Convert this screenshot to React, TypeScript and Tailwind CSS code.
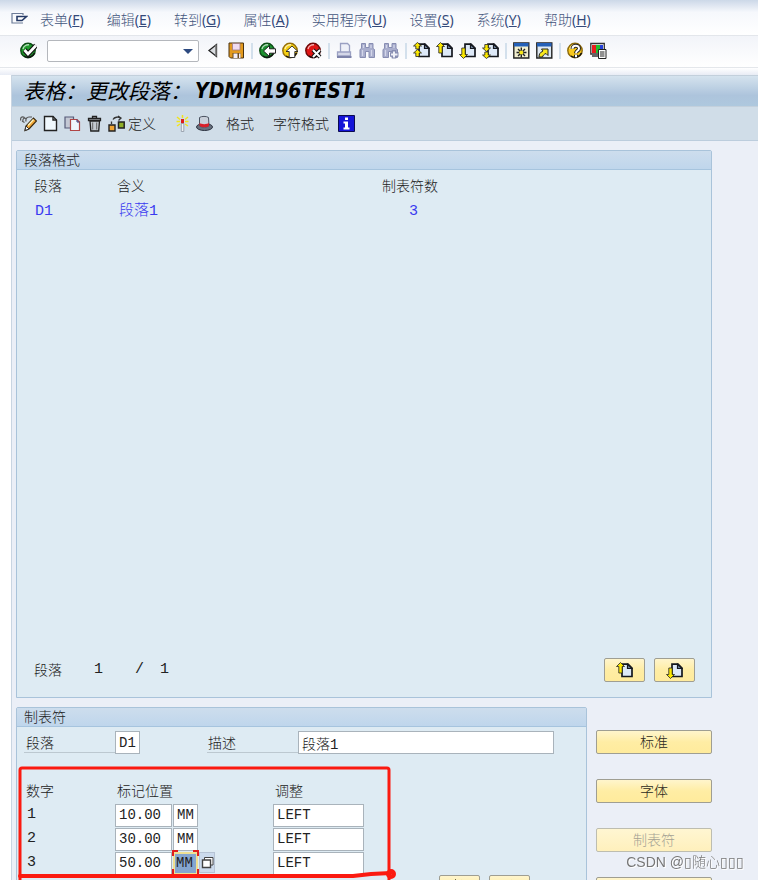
import type { ReactNode } from 'react';
import clsx from 'clsx';

const menus = [
  { label: '表单', hotkey: 'F' },
  { label: '编辑', hotkey: 'E' },
  { label: '转到', hotkey: 'G' },
  { label: '属性', hotkey: 'A' },
  { label: '实用程序', hotkey: 'U' },
  { label: '设置', hotkey: 'S' },
  { label: '系统', hotkey: 'Y' },
  { label: '帮助', hotkey: 'H' },
];

const tabs = [
  { no: 1, position: '10.00', unit: 'MM', align: 'LEFT' },
  { no: 2, position: '30.00', unit: 'MM', align: 'LEFT' },
  { no: 3, position: '50.00', unit: 'MM', align: 'LEFT' },
];

function Icon({ children }: { children: ReactNode }) {
  return (
    <svg width="17" height="17" viewBox="0 0 17 17" fill="none" aria-hidden="true" className="shrink-0">
      {children}
    </svg>
  );
}

function Ball({ color, dark, children }: { color: string; dark: string; children: ReactNode }) {
  return (
    <Icon>
      <circle cx="8" cy="8.5" r="7.2" fill={color} stroke={dark} strokeWidth="1.4" />
      <path d="M3 7a5.500 5.500 0 0 1 6-4.200" stroke="#fff" strokeOpacity=".65" strokeWidth="1.400" />
      <path d="M4 14a7 7 0 0 0 10.500-3" stroke="#111" strokeWidth="1.500" />
      {children}
    </Icon>
  );
}

const CheckIcon = () => (
  <Ball color="#1f9a2c" dark="#0d4d16">
    <path d="M4.500 8l3.500 4L16 3.500" stroke="#111" strokeWidth="5" />
    <path d="M4.500 8l3.500 4L16 3.500" stroke="#fff" strokeWidth="2.800" />
  </Ball>
);
const BackIcon = () => (
  <Ball color="#1c9130" dark="#0d4d16">
    <path d="M4.500 9l6-5.500v3.300h6v4.400h-6v3.300z" fill="#fff" stroke="#111" strokeWidth=".9" />
  </Ball>
);
const ExitIcon = () => (
  <Ball color="#f6cf12" dark="#96700a">
    <path d="M10 4l6 5.500h-3.200v6H7.200v-6H4z" fill="#fff" stroke="#222" strokeWidth=".9" />
  </Ball>
);
const CancelIcon = () => (
  <Ball color="#e01515" dark="#6d0808">
    <path d="M8 8l7 7M15 8l-7 7" stroke="#111" strokeWidth="4" />
    <path d="M8 8l7 7M15 8l-7 7" stroke="#fff" strokeWidth="2" />
  </Ball>
);
const HelpIcon = () => (
  <Ball color="#f8c81c" dark="#8d6a0c">
    <path d="M5.500 6.800c0-4 6.500-4 6.500-.4 0 2.400-3 2.400-3 4.800M9 12.800v2.400" stroke="#222" strokeWidth="4" />
    <path d="M5.500 6.800c0-4 6.500-4 6.500-.4 0 2.400-3 2.400-3 4.800M9 12.800v2.400" stroke="#fff" strokeWidth="2" />
  </Ball>
);

const SaveIcon = () => (
  <Icon>
    <path d="M1 1h14.500v15H2.500L1 14.500z" fill="#e39a1e" stroke="#4a3310" />
    <path d="M4.500 1.500h7.500v6.500H4.500z" fill="#f0dcf2" stroke="#9c7a86" strokeWidth=".8" />
    <path d="M4.500 11h8v5h-8z" fill="#6b4a1c" />
    <path d="M5.500 11.500h4V16h-4zM11 11.500h1.500V16H11z" fill="#f4eef6" />
  </Icon>
);
const PrevIcon = () => (
  <Icon>
    <path d="M11.500 2.500v12L4 8.500z" fill="#d9dce0" stroke="#222" strokeWidth="1.300" />
    <path d="M11 2.500v12" stroke="#777" strokeWidth="1.500" />
  </Icon>
);
const PrintIcon = () => (
  <Icon>
    <path d="M4.500 10V1.500h7l2 2V10" fill="#eef0f8" stroke="#9aa0c2" strokeWidth="1.300" />
    <path d="M1.500 10h13v4h-13z" fill="#d4d7e8" stroke="#9aa0c2" strokeWidth="1.300" />
    <path d="M1 15h14.500" stroke="#7d83aa" strokeWidth="2" />
  </Icon>
);
const FindIcon = ({ next }: { next?: boolean }) => (
  <Icon>
    <path d="M2.500 1.500h4v4H10v-4h4v5l1.500 1v8H10v-6H6.500v6H1v-8l1.500-1z" fill="#a9aecd" stroke="#878db2" />
    <path d="M3.500 8v6M12.500 8v6M4.500 3v3M12 3v3" stroke="#d3d6ea" strokeWidth="1.200" />
    {next && <path d="M12 8v8.500M8 12.500h8.500" stroke="#878db2" strokeWidth="4.500" />}
    {next && <path d="M12 9.500v6M9 12.500h6.500" stroke="#f0f1f8" strokeWidth="2" />}
  </Icon>
);

const arrows = {
  first: 'M4.500 .5l4 3.500H6.200v3H8.500L4.500 3.500M4.500 .5L.5 4h2.300v3H.5h2.300M4.500 7l4 3.500H6.200V14H2.800v-3.500H.5z',
  up: 'M4.500 .5l4 4H6.200V11H2.800V4.500H.5z',
  down: 'M4.500 16.500l4-4H6.200V6H2.800v6.500H.5z',
  last: 'M4.500 9.500l4-3.500H6.200V2.500H2.800V6H.5zM4.500 16.500l4-3.500H6.200V10H2.800v3H.5z',
};

function PageIcon({ arrow }: { arrow: keyof typeof arrows }) {
  return (
    <Icon>
      <path d="M6 2.200h6l4 4v8.300H6z" fill="#dde9f8" stroke="#15181f" strokeWidth="1.700" />
      <path d="M11.500 2.200V6.500h4.500z" fill="#7489a5" stroke="#15181f" strokeWidth="1.200" />
      {arrow === 'first' ? (
        <path d="M4.500 .5l4 3.500H6.200v3H2.800V4H.5zM4.500 7.500l4 3.500H6.200v3.500H2.800V11H.5z" fill="#fbe800" stroke="#222" strokeWidth=".8" />
      ) : (
        <path d={arrows[arrow]} fill="#fbe800" stroke="#222" strokeWidth=".8" />
      )}
    </Icon>
  );
}

const SessionIcon = () => (
  <Icon>
    <path d="M.8 1h15v15H.8z" fill="#f2efcf" stroke="#222" strokeWidth="1.400" />
    <path d="M1 1h14.500v3.500H1z" fill="#2460b8" />
    <path d="M8.300 5.500v10M3.500 10.500h10M5 7l7 7M12 7l-7 7" stroke="#222" strokeWidth="1.400" />
    <circle cx="8.300" cy="10.500" r="2" fill="#f8e71a" />
  </Icon>
);
const ShortcutIcon = () => (
  <Icon>
    <path d="M.8 1h15v15H.8z" fill="#dfe9f2" stroke="#222" strokeWidth="1.400" />
    <path d="M1 1h14.500v3.500H1z" fill="#2460b8" />
    <path d="M3 15c0-3 1-4.500 4-6L5.500 7H12v6.500l-2-2c-2.500 1-3 2-3.500 3.500z" fill="#f8e71a" stroke="#222" />
  </Icon>
);
const LayoutIcon = () => (
  <Icon>
    <path d="M.8 1.500h13.500v10.500H.8z" fill="#fff" stroke="#333" strokeWidth="1.300" />
    <path d="M2 3h4v8H2z" fill="#e81c1c" />
    <path d="M6 3h4v8H6z" fill="#1fc02c" />
    <path d="M10 3h3v4h-3z" fill="#2440d8" />
    <path d="M2 14h6" stroke="#666" strokeWidth="2" />
    <path d="M8.500 7.500h7.500v9H8.500z" fill="#fff" stroke="#222" />
    <path d="M10 10h4.500M10 12h4.500M10 14h4.500" stroke="#222" />
  </Icon>
);

const ToggleIcon = () => (
  <Icon>
    <path d="M.8 5.500C0 2.500 2 1 4.500 2.500M3 6c-.5-2 1-3.500 3-2.500M6 6.500c-.5-2.500.5-4.500 3-4.500h3M2 6l2.500 1.500" stroke="#555" strokeWidth="1.200" />
    <path d="M5 15.500l1-4.500 7.500-8L16.500 6 9 14z" fill="#f0a534" stroke="#3b2a10" strokeWidth="1.200" />
    <path d="M8 10.500l5.500-6" stroke="#fff2b8" strokeWidth="1.400" />
    <path d="M5 15.500l1-4.500 3 3z" fill="#fff" stroke="#333" />
  </Icon>
);
const NewIcon = () => (
  <Icon>
    <path d="M2.500 1.500h8.500l3.500 3.500v10.500h-12z" fill="#f0f8fd" stroke="#222" strokeWidth="1.400" />
    <path d="M11 1.500V5h3.500" stroke="#222" strokeWidth="1.400" />
  </Icon>
);
const CopyIcon = () => (
  <Icon>
    <path d="M1 2h8.500v11H1z" fill="#c3c8d4" stroke="#565b78" strokeWidth="1.200" />
    <path d="M6.500 4.500h6.500l2.500 2.500v8.500h-9z" fill="#eef5fc" stroke="#b04545" strokeWidth="1.200" />
    <path d="M13 4.500v2.500h2.500" stroke="#343a78" />
  </Icon>
);
const TrashIcon = () => (
  <Icon>
    <path d="M6.500 3V1.500h4V3M2.500 3.500h12v2h-12z" fill="#c8ccd2" stroke="#222" strokeWidth="1.300" />
    <path d="M4 6h9.500l-.8 10H4.800z" fill="#c3c9d0" stroke="#222" strokeWidth="1.300" />
    <path d="M6.700 7.500v7M10.700 7.500v7" stroke="#666" />
  </Icon>
);
const DefineIcon = () => (
  <Icon>
    <path d="M1 10h6v6H1z" fill="#f0a534" stroke="#222" strokeWidth="1.400" />
    <path d="M10.500 7h5.700v6h-5.700z" fill="#8fae28" stroke="#222" strokeWidth="1.500" />
    <path d="M3.500 9V6.500M5 4.500c1.500-2.500 5-3 7.500-1.500M10 1l3 2-2.500 2.500" stroke="#333" strokeWidth="1.300" />
  </Icon>
);
const WandIcon = () => (
  <Icon>
    <path d="M3 2l3 2.500M14 2l-3 2.500M2.500 6.500H6M14.500 6.500H11M3 11l3-2M14 11l-3-2M8.500 0v3" stroke="#f2e41c" strokeWidth="1.500" />
    <path d="M7 4h3v4.500H7z" fill="#e01c1c" />
    <path d="M7.300 8.500h2.500v8H7.300z" fill="#eef1f4" stroke="#8b96a2" strokeWidth=".8" />
  </Icon>
);
const HatIcon = () => (
  <Icon>
    <ellipse cx="8.500" cy="12" rx="8" ry="3.500" fill="#68707e" stroke="#2c3340" />
    <path d="M3.500 2.500c2-1.500 7-1.500 9 0L13 11c-2 1.500-7 1.500-9.500 0z" fill="#c9d0da" stroke="#4a5260" />
    <path d="M3.500 8c2 1.500 7.500 1.500 9.500 0v3c-2 1.800-7 1.800-9.500 0z" fill="#d8202a" />
  </Icon>
);
const InfoIcon = () => (
  <Icon>
    <path d="M.5 .5h16v16H.5z" fill="#1414d8" stroke="#0b0b50" />
    <path d="M7 2.500h3v2.500H7zM5.500 6.500H10V12.500h1.500V14.500h-6V12.500H7V8.500H5.500z" fill="#fff" />
  </Icon>
);
const MenuIcon = () => (
  <Icon>
    <path d="M12 4V2.500H1v9.500h11" stroke="#6d7c98" strokeWidth="1.200" />
    <path d="M6 5.500h9.500L11 9.500H6z" fill="#fff" stroke="#253a66" strokeWidth="1.600" />
  </Icon>
);

function IconButton({ label, children }: { label: string; children: ReactNode }) {
  return (
    <button type="button" aria-label={label} title={label} className="flex shrink-0">
      {children}
    </button>
  );
}

const Separator = () => <span className="w-[2px] h-4 shrink-0 bg-[#d3e0ec]" />;

function YellowButton({ children, label, disabled, className }: {
  children?: ReactNode;
  label?: string;
  disabled?: boolean;
  className?: string;
}) {
  return (
    <button
      type="button"
      aria-label={label}
      disabled={disabled}
      className={clsx(
        'h-6 shrink-0 flex items-center justify-center border rounded-xs bg-linear-to-b',
        disabled
          ? 'border-[#bdbdb0] from-[#fff6d2] to-[#fff0bc] text-[#a5a294]'
          : 'border-[#9f9e92] from-[#fff5cc] via-[#ffeda4] to-[#ffeb9c] text-[#2c2a22]',
        className,
      )}
    >
      {children}
    </button>
  );
}

function Group({ title, children, className }: { title: string; children: ReactNode; className?: string }) {
  return (
    <section className={clsx('border border-[#a9c3da] rounded-t-xs bg-[#deebf3]', className)}>
      <h2 className="h-[19px] px-[7px] leading-[18px] border-b border-[#a6c4de] bg-linear-to-b from-[#cddded] to-[#bfd6ec]">
        {title}
      </h2>
      {children}
    </section>
  );
}

const mono = "font-['Liberation_Mono','Noto_Sans_CJK_SC',monospace]";
const field = "block h-[23px] font-['Liberation_Mono','Noto_Sans_CJK_SC',monospace] text-[#222] outline-none";
const plain = 'px-[3px] border border-[#a9b3bb] bg-white';
const focused = 'px-px border-2 border-[#efe093] bg-[#86a6cf]';

export default function App() {
  return (
    <div className="h-screen overflow-hidden flex flex-col bg-white font-['Noto_Sans','Noto_Sans_CJK_SC',sans-serif] text-sm font-light text-[#222]">
      <nav className="h-9 shrink-0 flex items-center pl-[11px] pt-1 border-b border-[#e3e6eb] bg-linear-to-b from-[#ccd8e8] via-[#f6f8fc] via-35% to-white">
        <IconButton label="菜单">
          <MenuIcon />
        </IconButton>
        <ul className="flex gap-[23px] ml-3 text-[#43557c]">
          {menus.map(m => (
            <li key={m.hotkey}>
              <button type="button" className="whitespace-nowrap">
                {m.label}
                <span className="font-normal text-[#34497a]">(<u>{m.hotkey}</u>)</span>
              </button>
            </li>
          ))}
        </ul>
      </nav>

      <div className="h-8 shrink-0 flex items-center gap-[6px] pl-5 pb-[2px] border-b border-[#e4e7eb] bg-linear-to-b from-[#f2f4f9] to-white">
        <IconButton label="回车"><CheckIcon /></IconButton>
        <div className="relative ml-1 w-[152px] shrink-0">
          <input aria-label="命令" className="block w-full h-[22px] px-1 border border-[#b4b7bc] rounded-xs bg-white outline-none" />
          <svg width="10" height="5" viewBox="0 0 10 5" className="absolute right-[6px] top-[9px]" aria-hidden="true">
            <path d="M0 0h10L5 5z" fill="#2d4a80" />
          </svg>
        </div>
        <IconButton label="收起"><PrevIcon /></IconButton>
        <IconButton label="保存"><SaveIcon /></IconButton>
        <Separator />
        <IconButton label="返回"><BackIcon /></IconButton>
        <IconButton label="退出"><ExitIcon /></IconButton>
        <IconButton label="取消"><CancelIcon /></IconButton>
        <Separator />
        <IconButton label="打印"><PrintIcon /></IconButton>
        <IconButton label="查找"><FindIcon /></IconButton>
        <IconButton label="继续查找"><FindIcon next /></IconButton>
        <Separator />
        <IconButton label="第一页"><PageIcon arrow="first" /></IconButton>
        <IconButton label="上一页"><PageIcon arrow="up" /></IconButton>
        <IconButton label="下一页"><PageIcon arrow="down" /></IconButton>
        <IconButton label="最后一页"><PageIcon arrow="last" /></IconButton>
        <Separator />
        <IconButton label="新建会话"><SessionIcon /></IconButton>
        <IconButton label="快捷方式"><ShortcutIcon /></IconButton>
        <Separator />
        <IconButton label="帮助"><HelpIcon /></IconButton>
        <IconButton label="自定义布局"><LayoutIcon /></IconButton>
      </div>

      <div className="h-[7px] shrink-0 bg-linear-to-b from-white to-[#e8ecf5]" />

      <main className="flex-1 min-h-0 ml-[11px] flex flex-col border-l border-[#c9d5e2] bg-[#ebeff7]">
        <h1 className="h-8 shrink-0 flex items-center pl-[11px] border-y border-[#c3d0dc] bg-linear-to-b from-[#d5e3ee] via-[#adc4dc] via-65% to-[#aec8de] text-[21px] italic text-black whitespace-nowrap">
          <span className="font-normal">表格：更改段落：</span>
          <span className="ml-1 font-bold font-['DejaVu_Sans_Condensed','DejaVu_Sans',sans-serif]">YDMM196TEST1</span>
        </h1>

        <div className="h-[34px] shrink-0 flex items-center gap-[5px] pl-2 border-b border-[#bccddd] bg-[#d0dde8] whitespace-nowrap">
          <IconButton label="显示/更改"><ToggleIcon /></IconButton>
          <IconButton label="创建"><NewIcon /></IconButton>
          <IconButton label="复制"><CopyIcon /></IconButton>
          <IconButton label="删除"><TrashIcon /></IconButton>
          <button type="button" className="flex items-center gap-[3px]">
            <DefineIcon />定义
          </button>
          <span className="w-2" />
          <IconButton label="激活"><WandIcon /></IconButton>
          <IconButton label="表头"><HatIcon /></IconButton>
          <button type="button" className="ml-2">格式</button>
          <button type="button" className="ml-[14px]">字符格式</button>
          <span className="ml-1">
            <IconButton label="信息"><InfoIcon /></IconButton>
          </span>
        </div>

        <div className="pt-[9px] pl-1 pr-[46px] flex flex-col gap-[9px]">
          <Group title="段落格式" className="flex flex-col min-h-[548px]">
            <table className="w-full mt-1 table-fixed text-left leading-6">
              <colgroup>
                <col className="w-[100px]" />
                <col className="w-[265px]" />
                <col />
              </colgroup>
              <thead>
                <tr>
                  <th className="p-0 pl-[17px] font-light">段落</th>
                  <th className="p-0 font-light">含义</th>
                  <th className="p-0 font-light">制表符数</th>
                </tr>
              </thead>
              <tbody className={clsx(mono, 'text-[15px] leading-7 text-[#3a3af0]')}>
                <tr>
                  <td className="p-0 pl-[18px]">D1</td>
                  <td className="p-0 pl-[2px]">段落1</td>
                  <td className="p-0 pl-[27px]">3</td>
                </tr>
              </tbody>
            </table>
            <div className="mt-auto mb-[15px] pl-[17px] pr-4 flex items-center">
              <span>段落</span>
              <span className={clsx(mono, 'ml-8 text-[15px] leading-6')}>1</span>
              <span className={clsx(mono, 'ml-8 text-[15px] leading-6')}>/</span>
              <span className={clsx(mono, 'ml-4 text-[15px] leading-6')}>1</span>
              <YellowButton label="上一段落" className="w-[41px] ml-auto"><PageIcon arrow="up" /></YellowButton>
              <YellowButton label="下一段落" className="w-[41px] ml-[9px]"><PageIcon arrow="down" /></YellowButton>
            </div>
          </Group>

          <div className="flex items-start gap-[9px]">
            <Group title="制表符" className="flex-1 min-w-0">
              <div className="relative pt-1 pb-4">
                <div className="flex pl-[7px]">
                  <label htmlFor="para" className="w-[91px] h-[22px] shrink-0 border-b border-[#bcc8d0] leading-6 pl-[2px]">段落</label>
                  <input id="para" readOnly defaultValue="D1" className={clsx(field, plain, 'w-[25px]')} />
                  <label htmlFor="desc" className="w-[91px] h-[22px] shrink-0 ml-[67px] border-b border-[#bcc8d0] leading-6 pl-[1px]">描述</label>
                  <input id="desc" defaultValue="段落1" className={clsx(field, plain, 'flex-1 min-w-0 mr-8')} />
                </div>

                <table className="mt-[25px] table-fixed w-[356px] text-left leading-6">
                  <colgroup>
                    <col className="w-[98px]" />
                    <col className="w-[158px]" />
                    <col />
                  </colgroup>
                  <thead>
                    <tr>
                      <th className="p-0 pl-[9px] font-light">数字</th>
                      <th className="p-0 pl-[2px] font-light">标记位置</th>
                      <th className="p-0 pl-[2px] font-light">调整</th>
                    </tr>
                  </thead>
                  <tbody>
                    {tabs.map(tab => {
                      const active = tab.no === 3;
                      return (
                        <tr key={tab.no} className="h-6">
                          <td className={clsx(mono, 'p-0 pl-[10px] text-[15px]')}>{tab.no}</td>
                          <td className="p-0">
                            <div className="flex gap-[1px]">
                              <input aria-label={`标记位置 ${tab.no}`} defaultValue={tab.position} className={clsx(field, plain, 'w-[57px]')} />
                              <span className="relative">
                                <input
                                  aria-label={`单位 ${tab.no}`}
                                  defaultValue={tab.unit}
                                  className={clsx(field, active ? focused : plain, 'w-[25px]')}
                                />
                                {active && (
                                  <svg width="27" height="25" viewBox="0 0 27 25" fill="none" className="absolute -left-px -top-[2px]" aria-hidden="true">
                                    <path d="M1 6V1h5M21 1h5v5M1 19v5M26 19v5" stroke="#e01c1c" strokeWidth="2" />
                                  </svg>
                                )}
                              </span>
                              {active && (
                                <button type="button" aria-label="值帮助" className="w-4 h-[21px] flex items-center justify-center border border-[#b6c3d4] bg-[#cbdaec]">
                                  <svg width="13" height="13" viewBox="0 0 13 13" fill="#fff" stroke="#444" aria-hidden="true" className="shrink-0">
                                    <path d="M3.500 1.500h8.500v7.500h-8.500z" />
                                    <path d="M1.500 4h8v7.500h-8z" strokeWidth="1.400" />
                                  </svg>
                                </button>
                              )}
                            </div>
                          </td>
                          <td className="p-0">
                            <input aria-label={`调整 ${tab.no}`} defaultValue={tab.align} className={clsx(field, plain, 'w-[91px]')} />
                          </td>
                        </tr>
                      );
                    })}
                  </tbody>
                </table>

                <div className="flex justify-end gap-[9px] pr-14">
                  <YellowButton label="上一制表符" className="w-[41px]"><PageIcon arrow="up" /></YellowButton>
                  <YellowButton label="下一制表符" className="w-[41px]"><PageIcon arrow="down" /></YellowButton>
                </div>

                {/* red pen marks over the tab rows */}
                <svg width="400" height="170" viewBox="0 0 400 170" fill="none" stroke="#fb1a10" strokeWidth="4" strokeLinecap="round" strokeLinejoin="round" className="absolute left-0 top-0 pointer-events-none" aria-hidden="true">
                  <path d="M3 170V43q0-2 2-2h365q2 0 2 2V170" strokeWidth="3" />
                  <path d="M3 149h333l18-2 20-1" />
                  <circle cx="374" cy="147" r="3" />
                </svg>
              </div>
            </Group>

            <div className="w-[116px] shrink-0 pt-[23px] flex flex-col gap-[25px]">
              <YellowButton>标准</YellowButton>
              <YellowButton>字体</YellowButton>
              <YellowButton disabled>制表符</YellowButton>
              <YellowButton label="轮廓" />
            </div>
          </div>
        </div>
      </main>

      <div className="fixed right-[14px] bottom-2 leading-5 font-['Liberation_Sans','Noto_Sans_CJK_SC',sans-serif] text-[#777] text-shadow-[1px_1px_0_#fff] whitespace-nowrap">
        CSDN @▯随心▯▯▯
      </div>
    </div>
  );
}
